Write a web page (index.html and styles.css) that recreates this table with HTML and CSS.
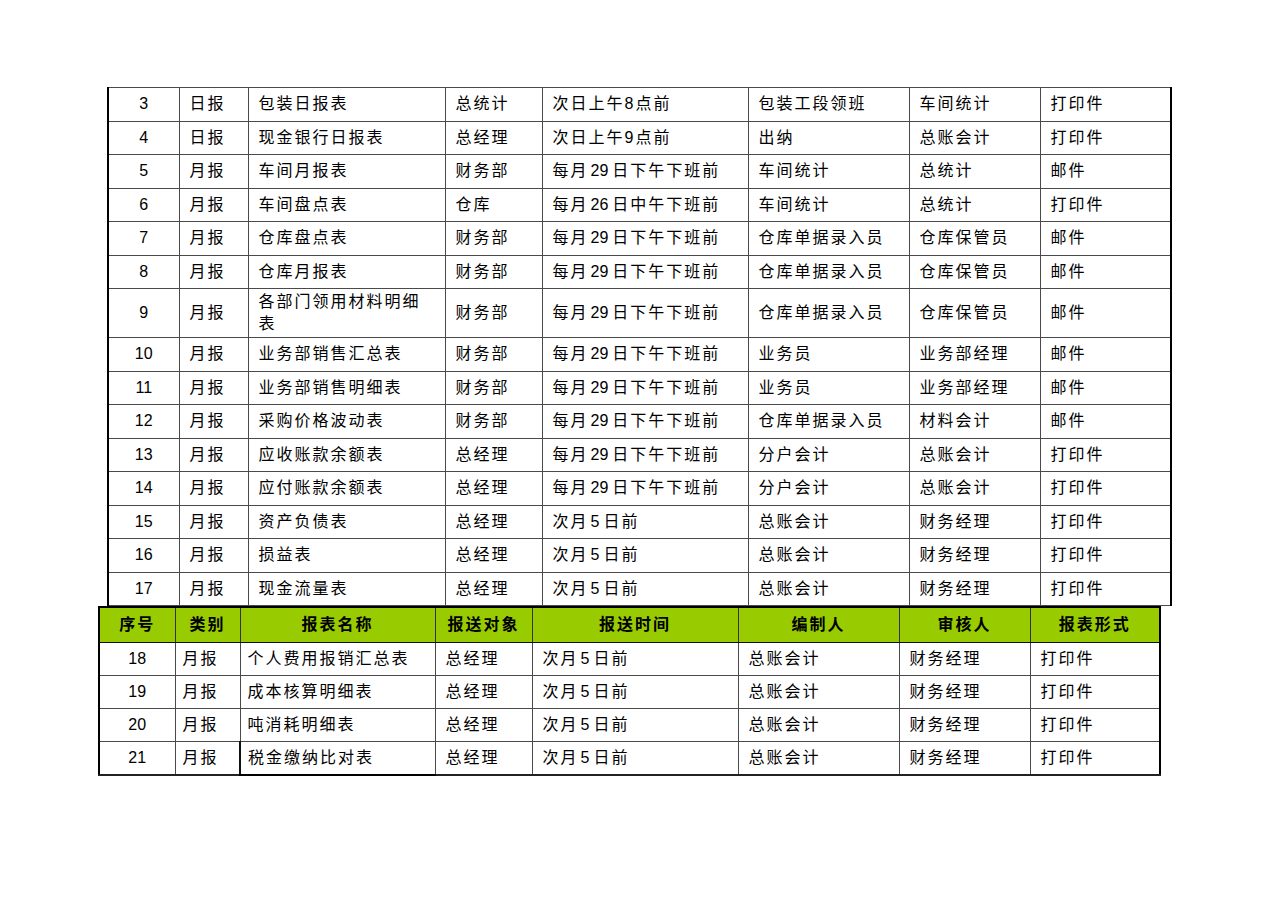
FILE: index.html
```html
<!DOCTYPE html>
<html lang="zh-CN">
<head>
<meta charset="utf-8">
<title>报表</title>
<link rel="stylesheet" href="styles.css">
</head>
<body>
<div class="page">
<table class="grid t1">
<colgroup>
<col class="c1a"><col class="c2a"><col class="c3a"><col class="c4"><col class="c5"><col class="c6"><col class="c7"><col class="c8a">
</colgroup>
<tbody>
<tr><td class="num">3</td><td>日报</td><td>包装日报表</td><td>总统计</td><td>次日上午8点前</td><td>包装工段领班</td><td>车间统计</td><td>打印件</td></tr>
<tr><td class="num">4</td><td>日报</td><td>现金银行日报表</td><td>总经理</td><td>次日上午9点前</td><td>出纳</td><td>总账会计</td><td>打印件</td></tr>
<tr><td class="num">5</td><td>月报</td><td>车间月报表</td><td>财务部</td><td>每月<span class="d">29</span>日下午下班前</td><td>车间统计</td><td>总统计</td><td>邮件</td></tr>
<tr><td class="num">6</td><td>月报</td><td>车间盘点表</td><td>仓库</td><td>每月<span class="d">26</span>日中午下班前</td><td>车间统计</td><td>总统计</td><td>打印件</td></tr>
<tr><td class="num">7</td><td>月报</td><td>仓库盘点表</td><td>财务部</td><td>每月<span class="d">29</span>日下午下班前</td><td>仓库单据录入员</td><td>仓库保管员</td><td>邮件</td></tr>
<tr><td class="num">8</td><td>月报</td><td>仓库月报表</td><td>财务部</td><td>每月<span class="d">29</span>日下午下班前</td><td>仓库单据录入员</td><td>仓库保管员</td><td>邮件</td></tr>
<tr class="tall"><td class="num">9</td><td>月报</td><td class="wrap">各部门领用材料明细表</td><td>财务部</td><td>每月<span class="d">29</span>日下午下班前</td><td>仓库单据录入员</td><td>仓库保管员</td><td>邮件</td></tr>
<tr><td class="num">10</td><td>月报</td><td>业务部销售汇总表</td><td>财务部</td><td>每月<span class="d">29</span>日下午下班前</td><td>业务员</td><td>业务部经理</td><td>邮件</td></tr>
<tr><td class="num">11</td><td>月报</td><td>业务部销售明细表</td><td>财务部</td><td>每月<span class="d">29</span>日下午下班前</td><td>业务员</td><td>业务部经理</td><td>邮件</td></tr>
<tr><td class="num">12</td><td>月报</td><td>采购价格波动表</td><td>财务部</td><td>每月<span class="d">29</span>日下午下班前</td><td>仓库单据录入员</td><td>材料会计</td><td>邮件</td></tr>
<tr><td class="num">13</td><td>月报</td><td>应收账款余额表</td><td>总经理</td><td>每月<span class="d">29</span>日下午下班前</td><td>分户会计</td><td>总账会计</td><td>打印件</td></tr>
<tr><td class="num">14</td><td>月报</td><td>应付账款余额表</td><td>总经理</td><td>每月<span class="d">29</span>日下午下班前</td><td>分户会计</td><td>总账会计</td><td>打印件</td></tr>
<tr><td class="num">15</td><td>月报</td><td>资产负债表</td><td>总经理</td><td>次月<span class="d">5</span>日前</td><td>总账会计</td><td>财务经理</td><td>打印件</td></tr>
<tr><td class="num">16</td><td>月报</td><td>损益表</td><td>总经理</td><td>次月<span class="d">5</span>日前</td><td>总账会计</td><td>财务经理</td><td>打印件</td></tr>
<tr><td class="num">17</td><td>月报</td><td>现金流量表</td><td>总经理</td><td>次月<span class="d">5</span>日前</td><td>总账会计</td><td>财务经理</td><td>打印件</td></tr>
</tbody>
</table>
<table class="grid t2">
<colgroup>
<col class="c1b"><col class="c2b"><col class="c3b"><col class="c4"><col class="c5"><col class="c6"><col class="c7"><col class="c8b">
</colgroup>
<thead>
<tr class="head"><th>序号</th><th>类别</th><th>报表名称</th><th>报送对象</th><th>报送时间</th><th>编制人</th><th>审核人</th><th>报表形式</th></tr>
</thead>
<tbody>
<tr><td class="num">18</td><td class="tight">月报</td><td class="tight">个人费用报销汇总表</td><td>总经理</td><td>次月<span class="d">5</span>日前</td><td>总账会计</td><td>财务经理</td><td>打印件</td></tr>
<tr><td class="num">19</td><td class="tight">月报</td><td class="tight">成本核算明细表</td><td>总经理</td><td>次月<span class="d">5</span>日前</td><td>总账会计</td><td>财务经理</td><td>打印件</td></tr>
<tr><td class="num">20</td><td class="tight">月报</td><td class="tight">吨消耗明细表</td><td>总经理</td><td>次月<span class="d">5</span>日前</td><td>总账会计</td><td>财务经理</td><td>打印件</td></tr>
<tr><td class="num">21</td><td class="tight">月报</td><td class="tight last">税金缴纳比对表</td><td>总经理</td><td>次月<span class="d">5</span>日前</td><td>总账会计</td><td>财务经理</td><td>打印件</td></tr>
</tbody>
</table>
</div>
</body>
</html>
```
FILE: styles.css
```css
html, body {
  margin: 0;
  padding: 0;
  background: #ffffff;
}
body {
  font-family: "Liberation Sans", "Noto Sans CJK SC", sans-serif;
  font-size: 16px;
  color: #000;
}
.page {
  padding-top: 87px;
}
.grid {
  border-collapse: collapse;
  table-layout: fixed;
}
.grid td,
.grid th {
  border: 1px solid #4a4a4a;
  padding: 0 10px;
  letter-spacing: 2px;
  line-height: 22px;
  vertical-align: middle;
  text-align: left;
  white-space: nowrap;
  overflow: hidden;
}
.grid td.wrap {
  white-space: normal;
}
.grid td.num {
  text-align: center;
  letter-spacing: 0;
  padding: 0;
}
.grid .d {
  letter-spacing: 0;
  margin: 0 4px 0 2px;
}
.t1 {
  margin-left: 107px;
  width: 1063px;
  border: 2px solid #000;
  border-top: 1px solid #000;
  border-bottom: 1px solid #000;
}
.t1 tr {
  height: 33.5px;
}
.t1 tr.tall {
  height: 49px;
}
.t2 {
  margin-left: 98px;
  width: 1061px;
  border: 2px solid #000;
  border-bottom: 2px solid #222;
}
.t2 tr {
  height: 33.3px;
}
.t2 tr.head {
  height: 35px;
}
.t2 th {
  background: #99cc00;
  font-weight: bold;
  text-align: center;
  border-color: #333;
  border-bottom: 1px solid #111;
  padding: 0;
}
.t2 td.tight {
  padding-left: 7px;
}
.t2 td.last {
  border-left: 2px solid #111;
  border-bottom: 2px solid #000;
}
.c1a { width: 71px; }
.c2a { width: 69px; }
.c3a { width: 197px; }
.c4 { width: 97px; }
.c5 { width: 206px; }
.c6 { width: 161px; }
.c7 { width: 131px; }
.c8a { width: 131px; }
.c1b { width: 76px; }
.c2b { width: 65px; }
.c3b { width: 195px; }
.c8b { width: 130px; }
```
